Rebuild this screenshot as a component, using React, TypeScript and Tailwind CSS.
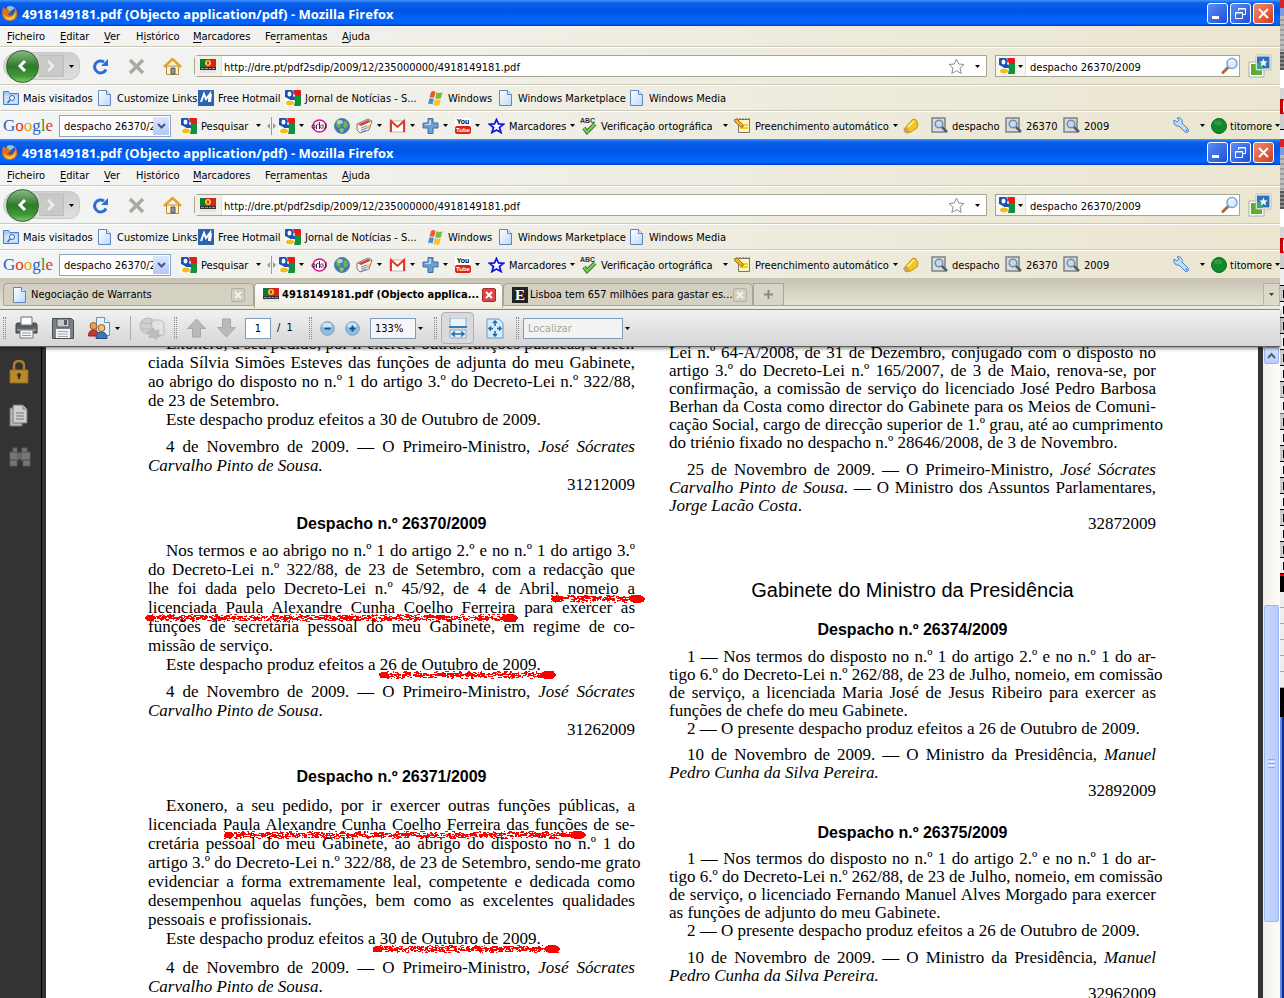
import type { ReactNode } from 'react';

const UI_FONT = "font-['DejaVu_Sans_Condensed','DejaVu_Sans',sans-serif]";

/* ---------- icons ---------- */

const FirefoxIcon = () => (
  <svg width="16" height="16" viewBox="0 0 16 16">
    <circle cx="8" cy="7" r="6.500" fill="#2f55a8" />
    <path d="M5 2c2-2 6-1 8 1l-3 2-2 2-3-3z" fill="#8fc1ee" />
    <path d="M1 2l2 2 2-1 1 2 3 1-1 2-2 1c1 2 4 2 5 0l2-2 0-4c4 4 3 13-5 13S-1 9 1 2z" fill="#e0701a" />
    <path d="M2 8c1 4 4 5 7 4 3-1 4-3 4-6 2 5-1 9-5 9s-6-3-6-7z" fill="#f8c84c" />
  </svg>
);

const GoogleIcon = () => (
  <svg width="16" height="16" viewBox="0 0 16 16" className="shrink-0">
    <path d="M0 0h16v16H0z" fill="#fff" />
    <path d="M8 0h7q1 0 1 1v5h-6z" fill="#e21b1b" />
    <path d="M10 6h6v9q0 1-1 1H9l1-5-2-3z" fill="#109238" />
    <path d="M0 1q0-1 1-1h6l2 3-1 3 2 2v2H5L2 8 0 7z" fill="#1c50b8" />
    <ellipse cx="4.500" cy="4" rx="2" ry="2.500" fill="#fff" />
    <path d="M0 8l4 1 1 1-5 2z" fill="#fff" />
    <ellipse cx="5" cy="13" rx="4" ry="2.500" fill="#f2bd1d" />
  </svg>
);

const FlagIcon = () => (
  <svg width="16" height="14" viewBox="0 0 16 14" className="shrink-0">
    <path d="M0 0h6v8H0z" fill="#0a7a35" />
    <path d="M6 0h10v8H6z" fill="#d8231b" />
    <circle cx="8" cy="4" r="3" fill="#f0cf2a" />
    <path d="M7 2.500h2v3H7z" fill="#c33" />
    <path d="M0 8h16v3H0z" fill="#333" />
    <path d="M1 9.500h3M5 9.500h3M9 9.500h2M12 9.500h3" stroke="#999" />
    <path d="M0 11h16v3H0z" fill="#e4e4e4" />
  </svg>
);

const PageIcon = () => (
  <svg width="16" height="16" viewBox="0 0 16 16" className="shrink-0">
    <defs>
      <linearGradient id="pageFill" x1="0" y1="0" x2="1" y2="1">
        <stop offset="0" stopColor="#fff" />
        <stop offset="1" stopColor="#bcd8fb" />
      </linearGradient>
    </defs>
    <path d="M1.500.500h8l4 4v11h-12z" fill="url(#pageFill)" stroke="#5f87bf" />
    <path d="M9.500.500v4h4" fill="#dcebfd" stroke="#5f87bf" />
  </svg>
);

const FolderIcon = () => (
  <svg width="16" height="16" viewBox="0 0 16 16" className="shrink-0">
    <path d="M.500 14.500v-13h5l1.500 2h8.500v11z" fill="#a9cbf7" stroke="#4a7cc8" />
    <path d="M1.500 13.500v-8h13v8z" fill="#cfe2fc" />
    <circle cx="9" cy="8" r="2.500" fill="#eef6ff" stroke="#3a66b0" />
    <path d="M7 10l-2.500 3" stroke="#3a66b0" strokeWidth="1.500" />
  </svg>
);

const HotmailIcon = () => (
  <svg width="16" height="16" viewBox="0 0 16 16" className="shrink-0">
    <path d="M0 0h16v16H0z" fill="#2d64b0" />
    <path d="M3 12L6 4l2 5 4-5-1 8" fill="none" stroke="#fff" strokeWidth="2" />
    <path d="M11 4h3l-1 8h-3" fill="#fff" />
  </svg>
);

const WindowsIcon = () => (
  <svg width="16" height="16" viewBox="0 0 16 16" className="shrink-0">
    <path d="M3 2c2-1.500 3-1 4.500 0L6 8c-1.500-1-3-1-4.500 0z" fill="#ea5a2c" />
    <path d="M8.500 2.300c2 1 3.500 1 6 0L13 8c-2 1.200-4 1-5.800.200z" fill="#7fba3c" />
    <path d="M1.200 9c1.500-1 3-1 4.600 0L4.500 14.500c-1.500-1-3-1-4.500 0z" fill="#3f8fe0" />
    <path d="M6.800 9.300c1.700 1 3.500 1 6 0L11.500 15c-2 1.200-4 1-6 0z" fill="#f6c12c" />
  </svg>
);

const OrkutIcon = () => (
  <svg width="17" height="16" viewBox="0 0 17 16">
    <ellipse cx="8.500" cy="8" rx="6.500" ry="6" fill="#fff" stroke="#d4148c" strokeWidth="1.500" />
    <path d="M1 8.500q0-2 1.500-2t1.500 2-1.500 2-1.500-2zM5.500 11V7q.500-1 2-.500M8.500 4v7M9 8.500l2-2M9 8.500l2 2.500M12 6.500v3q.500 1.500 2.500.500V6.500M15 5v5" fill="none" stroke="#5a1745" />
  </svg>
);

const GlobeIcon = () => (
  <svg width="16" height="16" viewBox="0 0 16 16">
    <circle cx="8" cy="8" r="7.500" fill="#3f77b5" stroke="#5a7ea8" />
    <path d="M3 3c3-2 5-1 5 1L6 7l1 2-3 1-2-3zM10 3l3 1 1 4-3 3-2-3z" fill="#6fb352" />
    <path d="M5 11l4-1 1 3-3 2z" fill="#8cc46a" />
    <ellipse cx="6" cy="4" rx="3" ry="2" fill="#fff" opacity=".5" />
  </svg>
);

const NewsIcon = () => (
  <svg width="17" height="16" viewBox="0 0 17 16">
    <path d="M1 6l11-5 4 2-3 9-9 3-3-3z" fill="#f2f2ee" stroke="#7b7b76" />
    <path d="M2 6.500l10-4.500 3 1.500-10 4.500z" fill="#e03a2c" />
    <path d="M5 10l6-2M5 12l6-2M5 14l5-2" stroke="#7892b8" />
    <path d="M11 8l3-1-1 3-2 1z" fill="#f0c040" />
  </svg>
);

const GmailIcon = () => (
  <svg width="17" height="14" viewBox="0 0 17 14">
    <path d="M1 2h15v11H1z" fill="#fff" stroke="#dba9a4" />
    <path d="M2 13V2l6.500 6L15 2v11" fill="none" stroke="#dc3a30" strokeWidth="2" />
  </svg>
);

const PlusIcon = () => (
  <svg width="17" height="16" viewBox="0 0 17 16">
    <path d="M6 .500h5V5h5v5h-5v5.500H6V10H1V5h5z" fill="#6d9fd0" stroke="#3d6f9f" />
    <path d="M7 2h2v5H3V6h4z" fill="#b9d6ee" />
  </svg>
);

const YoutubeIcon = () => (
  <span className="flex w-4 shrink-0 flex-col items-center bg-white font-['Liberation_Sans',sans-serif] text-[7px] leading-[8px] font-bold text-black">
    <span>You</span>
    <span className="w-4 rounded-xs bg-[#e02020] text-center text-[6px] text-white">Tube</span>
  </span>
);

const BlueStar = () => (
  <svg width="17" height="16" viewBox="0 0 16 16">
    <path d="M8 1.500l2 4.500 5 .300-4 3.200 1.500 5L8 12l-4.500 2.500 1.500-5-4-3.200L6 6z" fill="#fff" stroke="#1414e6" strokeWidth="1.800" />
  </svg>
);

const SpellIcon = () => (
  <svg width="17" height="18" viewBox="0 0 17 18">
    <text x="0" y="6" fontSize="7" fontFamily="Liberation Sans, sans-serif" fontWeight="bold" fill="#333">ABC</text>
    <path d="M4 11l3 4 8-8" fill="none" stroke="#2e7d22" strokeWidth="4" />
    <path d="M4 11l3 4 8-8" fill="none" stroke="#7fd25c" strokeWidth="2" />
  </svg>
);

const FormIcon = () => (
  <svg width="17" height="17" viewBox="0 0 17 17">
    <path d="M4.500 2.500h11v13h-11z" fill="#fdf6b4" stroke="#777" />
    <path d="M6 8h8M6 11h8" stroke="#f1cf2a" strokeWidth="2" />
    <path d="M3 1v2M6 1v2M9 1v2M12 1v2M15 1v2" stroke="#666" />
    <path d="M0 3l3-1 6 6v2H7L1 5z" fill="#f4b625" stroke="#a66b14" />
  </svg>
);

const MarkerIcon = () => (
  <svg width="16" height="16" viewBox="0 0 16 16">
    <path d="M1 11l9-10 3 1 2 4-1 4-6 4-5 1z" fill="#f2c81e" stroke="#c49312" />
    <path d="M0 11l4-1 3 4-5 1z" fill="#c6a268" />
    <path d="M5 9l6-6" stroke="#fff2a0" strokeWidth="1.500" />
  </svg>
);

const FindIcon = () => (
  <svg width="17" height="17" viewBox="0 0 17 17">
    <path d="M1 1h13v14H1z" fill="#d9dde0" stroke="#7b848c" strokeWidth="1.500" />
    <circle cx="8" cy="7" r="3.800" fill="#c3daf0" stroke="#7d8c9a" strokeWidth="1.500" />
    <path d="M11 10l5 5" stroke="#555f6a" strokeWidth="2.500" />
  </svg>
);

const WrenchIcon = () => (
  <svg width="17" height="17" viewBox="0 0 17 17">
    <path d="M1 3l3 2 2-2-2-2c3-1 6 1 5 5l6 6c2 2-1 5-3 3L6 9C3 10 0 7 1 3z" fill="#bcdcf8" stroke="#4682c4" />
    <circle cx="13.500" cy="13.500" r="1" fill="#4682c4" />
  </svg>
);

const GreenDot = () => (
  <svg width="16" height="16" viewBox="0 0 16 16" className="shrink-0">
    <circle cx="8" cy="8" r="7.500" fill="#128a2a" stroke="#0c6a1e" />
    <ellipse cx="7" cy="5" rx="4" ry="2.500" fill="#2f9a44" />
  </svg>
);

const ReloadIcon = () => (
  <svg width="17" height="17" viewBox="0 0 17 17">
    <path d="M14 11.500A6 6 0 1 1 12 4" fill="none" stroke="#2b6fd6" strokeWidth="3" />
    <path d="M16 1v7H9z" fill="#2b6fd6" />
  </svg>
);

const StopIcon = () => (
  <svg width="17" height="17" viewBox="0 0 17 17">
    <path d="M2 2l13 13M15 2L2 15" stroke="#a9a9a6" strokeWidth="3.500" />
  </svg>
);

const HomeIcon = () => (
  <svg width="19" height="17" viewBox="0 0 19 17">
    <path d="M3.500 8h12v8.500h-12z" fill="#fdf3cf" stroke="#b98a3c" />
    <path d="M1 9l8.500-8L18 9" fill="none" stroke="#e9a21d" strokeWidth="2.500" />
    <path d="M8 10h4v6H8z" fill="#7a94c4" stroke="#6a5634" />
  </svg>
);

const MagnifierIcon = () => (
  <svg width="18" height="18" viewBox="0 0 18 18">
    <path d="M2 15.500l5-5" stroke="#b5673a" strokeWidth="3" strokeLinecap="round" />
    <circle cx="11" cy="6.500" r="5" fill="#d9ecfc" stroke="#7aa4d8" strokeWidth="1.500" />
    <path d="M8 5q2-3 5-1" fill="none" stroke="#fff" strokeWidth="1.500" />
  </svg>
);

const AddonIcon = () => (
  <svg width="24" height="24" viewBox="0 0 24 24">
    <path d="M1 8h15v15H1z" fill="#fff" stroke="#aaa" />
    <path d="M3 10h11v11H3z" fill="#59b030" />
    <path d="M8 1h15v15H8z" fill="#fff" stroke="#bbb" />
    <path d="M9 2.500h12.500v12H9z" fill="#2a72b8" />
    <path d="M9 9h6v6H9z" fill="#3fa08c" />
    <path d="M15.500 4.500l1.200 3h3l-2.400 2 .900 3-2.700-1.800-2.700 1.800.900-3-2.400-2h3z" fill="#fff" />
  </svg>
);

const Caret = ({ className = '' }: { className?: string }) => (
  <svg width="5" height="3" viewBox="0 0 5 3" className={`shrink-0 ${className}`}>
    <path d="M0 0h5L2.500 3z" fill="#000" />
  </svg>
);

/* ---------- browser chrome ---------- */

const TitleBar = () => (
  <header className="flex h-[26px] items-center bg-[linear-gradient(#3f96ff,#0a5ee8_12%,#0054e3_45%,#0066ff_75%,#0062f8_90%,#003dc4)] pl-0.5 pr-1.5">
    <FirefoxIcon />
    <h1 className="ml-1 flex-1 pt-0.5 font-['Open_Sans','Noto_Sans',sans-serif] text-[13px] font-bold whitespace-nowrap text-white">
      4918149181.pdf (Objecto application/pdf) - Mozilla Firefox
    </h1>
    <div className="flex gap-0.5">
      <button aria-label="Minimizar" className="flex h-[21px] w-[21px] items-end rounded-[3px] border border-white bg-linear-to-br from-[#5c8cf5] to-[#1c4fd6] p-1">
        <span className="h-[3px] w-[7px] bg-white" />
      </button>
      <button aria-label="Restaurar" className="flex h-[21px] w-[21px] items-center justify-center rounded-[3px] border border-white bg-linear-to-br from-[#5c8cf5] to-[#1c4fd6]">
        <svg width="11" height="11" viewBox="0 0 11 11" fill="none" stroke="#fff">
          <path d="M3.500 3V.500h7v6H8M.500 4.500h7v6h-7zM.500 5h7M3.500 1h7" />
        </svg>
      </button>
      <button aria-label="Fechar" className="flex h-[21px] w-[21px] items-center justify-center rounded-[3px] border border-white bg-linear-to-br from-[#f08a6c] to-[#d03a14]">
        <svg width="11" height="11" viewBox="0 0 11 11">
          <path d="M1 1l9 9M10 1l-9 9" stroke="#fff" strokeWidth="2" />
        </svg>
      </button>
    </div>
  </header>
);

const menus = [
  { before: '', hot: 'F', after: 'icheiro', width: 'w-[53px]' },
  { before: '', hot: 'E', after: 'ditar', width: 'w-[44px]' },
  { before: '', hot: 'V', after: 'er', width: 'w-[32px]' },
  { before: 'H', hot: 'i', after: 'stórico', width: 'w-[57px]' },
  { before: '', hot: 'M', after: 'arcadores', width: 'w-[72px]' },
  { before: 'Fe', hot: 'r', after: 'ramentas', width: 'w-[77px]' },
  { before: '', hot: 'A', after: 'juda', width: 'w-[40px]' },
];

const MenuBar = () => (
  <nav className="flex h-[21px] items-center border-b border-[#cfcab8] pt-0.5 pl-[7px]">
    {menus.map((menu) => (
      <button key={menu.hot} className={`text-left whitespace-nowrap ${menu.width}`}>
        {menu.before}
        <u className="underline-offset-2">{menu.hot}</u>
        {menu.after}
      </button>
    ))}
  </nav>
);

const NavBar = () => (
  <div className="flex h-[38px] items-center border-t border-b border-t-white border-b-[#cfcab8] pl-[3px] pr-2">
    <div className="flex h-7 w-[77px] shrink-0 items-center rounded-l-2xl rounded-r-xl border border-[#c9c9c7] bg-linear-to-b from-[#cfcfcd] to-[#dededc]">
      <button aria-label="Retroceder" className="-my-1 ml-0.5 flex h-[33px] w-[33px] shrink-0 items-center justify-center rounded-full border border-[#2f5c2c] bg-[linear-gradient(#86b982,#2f7a2b_50%,#3f9a35_80%,#7cc66c)]">
        <svg width="14" height="16" viewBox="0 0 14 16">
          <path d="M9 3L4 8l5 5" fill="none" stroke="#fff" strokeWidth="3" />
        </svg>
      </button>
      <button aria-label="Avançar" className="flex h-[22px] w-[25px] items-center justify-center border border-l-0 border-[#bdbdbb] bg-[#c9c9c8]">
        <svg width="12" height="12" viewBox="0 0 12 12">
          <path d="M3 1l5 5-5 5" fill="none" stroke="#eee" strokeWidth="2.500" />
        </svg>
      </button>
      <button aria-label="Histórico recente" className="ml-[5px] flex h-5 items-center">
        <Caret />
      </button>
    </div>
    <button aria-label="Recarregar" className="ml-3"><ReloadIcon /></button>
    <button aria-label="Parar" className="ml-[19px]"><StopIcon /></button>
    <button aria-label="Página inicial" className="ml-[18px]"><HomeIcon /></button>
    <div className="ml-3 flex h-[22px] flex-1 items-center rounded-l-sm border border-[#a5a595] bg-white">
      <span className="flex h-full w-[27px] items-center justify-center border-r border-[#ddd] bg-[#f3f1e6]"><FlagIcon /></span>
      <input
        aria-label="Endereço"
        defaultValue="http://dre.pt/pdf2sdip/2009/12/235000000/4918149181.pdf"
        className="ml-0.5 h-full min-w-0 flex-1 pt-0.5 outline-none"
      />
      <button aria-label="Adicionar aos marcadores">
        <svg width="17" height="17" viewBox="0 0 17 17">
          <path d="M8.500 1l2.200 5 5.300.500-4 3.600 1.200 5.400-4.700-2.800-4.700 2.800L5 10.100 1 6.500 6.300 6z" fill="#fff" stroke="#8d8d8d" />
        </svg>
      </button>
      <button aria-label="Mostrar histórico" className="mr-1.5 ml-2.5"><Caret /></button>
    </div>
    <div className="ml-2 flex h-[22px] w-[245px] items-center border border-[#a5a595] bg-white">
      <button aria-label="Motor de pesquisa" className="flex h-full w-[30px] items-center gap-[3px] border-r border-[#ddd] bg-[#f6f5ef] pl-[3px]">
        <GoogleIcon />
        <Caret />
      </button>
      <input aria-label="Pesquisar na Web" defaultValue="despacho 26370/2009" className="ml-1 h-full min-w-0 flex-1 pt-0.5 outline-none" />
      <button aria-label="Pesquisar"><MagnifierIcon /></button>
    </div>
    <button aria-label="Extensão" className="ml-2"><AddonIcon /></button>
  </div>
);

const bookmarks = [
  { label: 'Mais visitados', icon: <FolderIcon />, width: 'w-[94px]' },
  { label: 'Customize Links', icon: <PageIcon />, width: 'w-[101px]' },
  { label: 'Free Hotmail', icon: <HotmailIcon />, width: 'w-[87px]' },
  { label: 'Jornal de Notícias - S...', icon: <GoogleIcon />, width: 'w-[143px]' },
  { label: 'Windows', icon: <WindowsIcon />, width: 'w-[70px]' },
  { label: 'Windows Marketplace', icon: <PageIcon />, width: 'w-[131px]' },
  { label: 'Windows Media', icon: <PageIcon />, width: 'w-[100px]' },
];

const BookmarksBar = () => (
  <nav className="flex h-[26px] items-center border-t border-b border-t-white border-b-[#cfcab8] pl-[3px]">
    {bookmarks.map((item) => (
      <a key={item.label} href="#" className={`flex shrink-0 items-center gap-1 whitespace-nowrap ${item.width}`}>
        {item.icon}
        <span className="pt-0.5">{item.label}</span>
      </a>
    ))}
  </nav>
);

interface ToolProps {
  name: string;
  width: string;
  icon: ReactNode;
  label?: string;
  caret?: boolean;
}

const Tool = ({ name, width, icon, label, caret }: ToolProps) => (
  <button aria-label={name} className={`flex shrink-0 items-center gap-1 whitespace-nowrap [&_svg]:shrink-0 ${width}`}>
    {icon}
    {label && <span className="flex-1 pt-0.5 text-left">{label}</span>}
    {caret && <Caret className={label ? 'mr-1.5' : ''} />}
  </button>
);

const GoogleBar = () => (
  <div className="flex h-[28px] items-center border-t border-white pl-[3px]">
    <span className="w-14 font-['Liberation_Serif',serif] text-[17px] leading-5">
      <span className="text-[#2a5bd0]">G</span>
      <span className="text-[#d8322a]">o</span>
      <span className="text-[#dfa800]">o</span>
      <span className="text-[#2a5bd0]">g</span>
      <span className="text-[#1e9a3c]">l</span>
      <span className="text-[#d8322a]">e</span>
    </span>
    <div className="mr-2.5 flex h-[22px] w-[112px] shrink-0 items-center border border-[#8ea6c4] bg-white p-px">
      <input aria-label="Pesquisa Google" defaultValue="despacho 26370/2009" className="ml-[3px] h-full min-w-0 flex-1 pt-0.5 outline-none" />
      <button aria-label="Pesquisas anteriores" className="flex h-[18px] w-4 items-center justify-center bg-linear-to-b from-[#dbe6ff] to-[#b4c8f6]">
        <svg width="9" height="6" viewBox="0 0 9 6">
          <path d="M1 1l3.500 3.500L8 1" fill="none" stroke="#3f5684" strokeWidth="2" />
        </svg>
      </button>
    </div>
    <Tool name="Pesquisar" width="w-[86px]" icon={<GoogleIcon />} label="Pesquisar" caret />
    <span className="flex w-3 items-center">
      <svg width="9" height="18" viewBox="0 0 9 18" fill="#999">
        <path d="M4 0h1v18H4zM0 9l3-3v6zM9 9L6 6v6z" />
      </svg>
    </span>
    <Tool name="Google" width="w-8" icon={<GoogleIcon />} caret />
    <Tool name="Orkut" width="w-[23px]" icon={<OrkutIcon />} />
    <Tool name="Tradutor" width="w-[22px]" icon={<GlobeIcon />} />
    <Tool name="Notícias" width="w-[33px]" icon={<NewsIcon />} caret />
    <Tool name="Gmail" width="w-[33px]" icon={<GmailIcon />} caret />
    <Tool name="Adicionar" width="w-[33px]" icon={<PlusIcon />} caret />
    <Tool name="YouTube" width="w-[33px]" icon={<YoutubeIcon />} caret />
    <Tool name="Marcadores" width="w-[92px]" icon={<BlueStar />} label="Marcadores" caret />
    <Tool name="Verificação ortográfica" width="w-[154px]" icon={<SpellIcon />} label="Verificação ortográfica" caret />
    <Tool name="Preenchimento automático" width="w-[169px]" icon={<FormIcon />} label="Preenchimento automático" caret />
    <Tool name="Realçar" width="w-[28px]" icon={<MarkerIcon />} />
    <Tool name="Localizar despacho" width="w-[74px]" icon={<FindIcon />} label="despacho" />
    <Tool name="Localizar 26370" width="w-[58px]" icon={<FindIcon />} label="26370" />
    <Tool name="Localizar 2009" width="w-[58px]" icon={<FindIcon />} label="2009" />
    <span className="flex-1" />
    <button aria-label="Definições" className="flex w-[38px] shrink-0 items-center justify-between pr-1.5">
      <WrenchIcon />
      <Caret />
    </button>
    <button className="flex w-[69px] shrink-0 items-center gap-[3px]">
      <GreenDot />
      <span className="pt-0.5">titomore</span>
      <Caret />
    </button>
  </div>
);

const BrowserChrome = () => (
  <div className="bg-linear-to-r from-[#f3f5f5] via-[#efede3] to-[#ebe6cf]">
    <TitleBar />
    <MenuBar />
    <NavBar />
    <BookmarksBar />
    <GoogleBar />
  </div>
);

/* ---------- tabs ---------- */

const CloseTab = ({ active }: { active?: boolean }) => (
  <button
    aria-label="Fechar separador"
    className={`flex h-[14px] w-[14px] shrink-0 items-center justify-center rounded-xs border ${
      active ? 'border-[#a52a2a] bg-[#d9474b]' : 'border-[#b5b2a4] bg-[#d2cfc2]'
    }`}
  >
    <svg width="8" height="8" viewBox="0 0 8 8">
      <path d="M1 1l6 6M7 1L1 7" stroke={active ? '#fff' : '#f4f3ec'} strokeWidth="1.800" />
    </svg>
  </button>
);

const TabBar = () => (
  <div className="flex h-[31px] items-end bg-linear-to-b from-[#c6c3b3] via-[#d8d5c6] to-[#e8e5d8] pl-[3px]">
    <div className="flex h-[26px] flex-1 items-start border-b-[3px] border-[#efede0]">
      <div className="flex h-[23px] w-[251px] items-center rounded-t-sm border border-[#a8a594] bg-[#d4d1c3] pr-2 pl-2">
        <PageIcon />
        <span className="ml-[3px] flex-1 whitespace-nowrap">Negociação de Warrants</span>
        <CloseTab />
      </div>
      <div className="flex h-[25px] w-[249px] items-center rounded-t-sm border border-b-0 border-[#a8a594] bg-linear-to-b from-white to-[#efede0] pr-1.5 pb-0.5 pl-2">
        <FlagIcon />
        <span className="ml-[3px] flex-1 font-bold whitespace-nowrap">4918149181.pdf (Objecto applica...</span>
        <CloseTab active />
      </div>
      <div className="flex h-[23px] w-[250px] items-center rounded-t-sm border border-[#a8a594] bg-[#d4d1c3] pr-1.5 pl-2">
        <span className="flex h-4 w-4 shrink-0 items-center justify-center bg-[#222] font-['Liberation_Serif',serif] text-[15px] font-bold text-white">E</span>
        <span className="ml-0.5 flex-1 whitespace-nowrap">Lisboa tem 657 milhões para gastar es...</span>
        <CloseTab />
      </div>
      <button aria-label="Novo separador" className="flex h-[23px] w-[31px] items-center justify-center border border-[#a8a594] bg-[#d8d5c8]">
        <svg width="9" height="9" viewBox="0 0 9 9">
          <path d="M4.500 0v9M0 4.500h9" stroke="#888" strokeWidth="2" />
        </svg>
      </button>
      <span className="h-[23px] flex-1 border-b border-[#a8a594]" />
      <button aria-label="Listar separadores" className="flex h-[23px] w-[17px] items-center justify-center border border-[#a8a594] bg-[#dedbcd] opacity-70">
        <Caret />
      </button>
    </div>
  </div>
);

/* ---------- PDF viewer ---------- */

const Grip = ({ className = '' }: { className?: string }) => (
  <span className={`h-[22px] w-[3px] shrink-0 border-x border-dotted border-[#8c8c8c] ${className}`} />
);

const ZoomButton = ({ plus }: { plus?: boolean }) => (
  <button aria-label={plus ? 'Ampliar' : 'Reduzir'}>
    <svg width="15" height="15" viewBox="0 0 15 15">
      <circle cx="7.500" cy="7.500" r="6.800" fill="#8dbfe4" stroke="#7d9fbe" />
      <ellipse cx="7" cy="4.500" rx="4.500" ry="2.800" fill="#cfe6f6" />
      <path d={plus ? 'M4.500 7.500h6M7.500 4.500v6' : 'M4.500 7.500h6'} stroke="#1b4f80" strokeWidth="2" />
    </svg>
  </button>
);

const PdfToolbar = () => (
  <div className="relative z-10 flex h-[38px] shrink-0 items-center border-t border-b border-t-[#8a887c] border-b-[#5a5a5a] bg-linear-to-b from-[#f1f1f1] to-[#d6d6d6] pl-[3px] shadow-[0_2px_3px_rgba(0,0,0,0.4)]">
    <Grip />
    <button aria-label="Imprimir" className="ml-[9px]">
      <svg width="23" height="24" viewBox="0 0 23 24">
        <path d="M6 1h11v8H6z" fill="#fff" stroke="#666" />
        <path d="M1 9q0-2 2-2h2v3h13V7h2q2 0 2 2v8H1z" fill="#5c6268" stroke="#3a3e42" />
        <path d="M2 13h19v2H2z" fill="#8d949a" />
        <path d="M5 14h13v8H5z" fill="#f4f6f7" stroke="#777" />
        <path d="M7 17h9M7 19.500h9" stroke="#999" />
      </svg>
    </button>
    <button aria-label="Guardar" className="ml-3.5">
      <svg width="22" height="23" viewBox="0 0 22 23">
        <path d="M.500 1.500h19l2 2v18H.500z" fill="#7b8187" stroke="#4b4f53" />
        <path d="M5 2h12v8H5z" fill="#c5cacd" stroke="#555" />
        <path d="M12 3h3v5h-3z" fill="#555b60" />
        <path d="M4 12h14v9H4z" fill="#eef3f5" />
        <path d="M6 14.500h10M6 17h10M6 19.500h10" stroke="#9aa8b2" />
      </svg>
    </button>
    <button aria-label="Colaborar" className="ml-3.5 flex items-center gap-[5px]">
      <svg width="22" height="24" viewBox="0 0 22 24">
        <path d="M8.500 1.500h8l5 5v13h-13z" fill="#e6f2fc" stroke="#5d92c2" />
        <path d="M16.500 1.500v5h5" fill="#fff" stroke="#5d92c2" />
        <circle cx="5.500" cy="10" r="3.500" fill="#e0a060" stroke="#9b5a20" />
        <path d="M.500 20q0-6 5-6t5 6z" fill="#c23b34" stroke="#8b221c" />
        <circle cx="13.500" cy="12" r="3.500" fill="#f0be85" stroke="#9b5a20" />
        <path d="M8 22.500q0-6.500 5.500-6.500t5.500 6.500z" fill="#3f74b6" stroke="#214c82" />
      </svg>
      <Caret />
    </button>
    <span className="mr-2 ml-2.5 h-6 w-px bg-[#aaa]" />
    <button aria-label="Criar PDF">
      <svg width="26" height="24" viewBox="0 0 26 24" stroke="#b8b8b8">
        <circle cx="9" cy="10" r="8" fill="#cfcfcf" />
        <path d="M12 4h10l3 3v12H14z" fill="#e3e3e3" />
        <path d="M3 6q6 4 12-1M3 13h12" fill="none" />
        <path d="M14 12l2 3 4-1-1 4 3 2-4 1-1 3-3-3-4 1 1-4-3-2 4-1z" fill="#bdbdbd" />
      </svg>
    </button>
    <Grip className="mx-[9px]" />
    <button aria-label="Página anterior">
      <svg width="21" height="20" viewBox="0 0 21 20">
        <path d="M10.500 1l9 9.500h-5V19h-8v-8.500h-5z" fill="#b9b9b9" stroke="#a8a8a8" />
      </svg>
    </button>
    <button aria-label="Página seguinte" className="ml-[9px]">
      <svg width="21" height="20" viewBox="0 0 21 20">
        <path d="M10.500 19l9-9.500h-5V1h-8v8.500h-5z" fill="#b9b9b9" stroke="#a8a8a8" />
      </svg>
    </button>
    <input aria-label="Página" defaultValue="1" className="ml-2 h-[21px] w-[26px] border border-[#7f9db9] bg-white text-center outline-none" />
    <span className="ml-1.5 w-8 whitespace-pre">/  1</span>
    <Grip />
    <span className="ml-2 flex gap-2.5">
      <ZoomButton />
      <ZoomButton plus />
    </span>
    <input aria-label="Zoom" defaultValue="133%" className="ml-2.5 h-[21px] w-[46px] border border-[#7f9db9] bg-[#f5f5f5] pl-1 outline-none" />
    <button aria-label="Escolher zoom" className="flex h-5 w-[18px] items-center pl-0.5"><Caret /></button>
    <Grip />
    <button aria-label="Ajustar à largura" className="ml-1 flex h-8 w-[33px] items-center justify-center rounded-sm border border-[#b0b0b0] bg-[#dadada]">
      <svg width="18" height="21" viewBox="0 0 18 21">
        <path d="M1 0h16v9H1z" fill="#eaf4fc" stroke="#84acd0" />
        <path d="M0 8h18v2H0z" fill="#3a7fb8" />
        <path d="M1 12h16v8H1z" fill="#e4f1fb" stroke="#84acd0" />
        <path d="M3 16h12M6 13.500L3 16l3 2.500M12 13.500l3 2.500-3 2.500" fill="none" stroke="#1e6aa8" strokeWidth="1.500" />
      </svg>
    </button>
    <button aria-label="Ajustar à página" className="mr-3 ml-3">
      <svg width="18" height="21" viewBox="0 0 18 21">
        <path d="M1 1h12l4 4v15H1z" fill="#d6eafa" stroke="#5d99cc" />
        <path d="M9 3v5M7 5l2-2 2 2M9 13v5M7 16l2 2 2-2M3 10.500h4M5 8.500l-2 2 2 2M11 10.500h4M13 8.500l2 2-2 2" fill="none" stroke="#1e6aa8" strokeWidth="1.500" />
      </svg>
    </button>
    <Grip className="mr-1" />
    <input aria-label="Localizar" placeholder="Localizar" className="h-[21px] w-[100px] border border-[#7f9db9] bg-[#f3f3f3] pl-1 outline-none placeholder:text-[#a5a596]" />
    <button aria-label="Opções de localização" className="flex h-5 items-center pl-0.5"><Caret /></button>
  </div>
);

const SideBar = () => (
  <aside className="flex w-[46px] shrink-0 flex-col gap-5 border-r-4 border-[#333] bg-[linear-gradient(90deg,#333_40px,#666_40px,#000_41px)] pt-[13px] pl-[9px]">
    <button aria-label="Segurança">
      <svg width="20" height="24" viewBox="0 0 20 24">
        <path d="M5 11V6q0-5 5-5t5 5v5" fill="none" stroke="#a5802f" strokeWidth="2.500" />
        <path d="M1 10h18v13H1z" fill="#b98a2c" stroke="#8f6a1d" />
        <circle cx="10" cy="15" r="2" fill="#3d2f10" />
        <path d="M9 15h2v4H9z" fill="#3d2f10" />
      </svg>
    </button>
    <button aria-label="Páginas">
      <svg width="20" height="23" viewBox="0 0 20 23" stroke="#777">
        <path d="M1 4h12v18H1z" fill="#bbb" />
        <path d="M4 1h10l4 4v14H4z" fill="#cfcfcf" />
        <path d="M14 1v4h4M7 9h8M7 12h8M7 15h8" fill="none" />
      </svg>
    </button>
    <button aria-label="Pesquisar no documento">
      <svg width="22" height="20" viewBox="0 0 22 20" fill="#777" stroke="#5c5c5c">
        <path d="M4 1h4v4H4zM13 1h5v4h-5zM1 5h8v8H1zM12 5h9v8h-9zM1 13h7v6H1zM14 13h7v6h-7zM9 6h3v6H9z" />
      </svg>
    </button>
  </aside>
);

// Rough marker stroke: solid ends with speckles between them.
const Scribble = ({ left, width }: { left: number; width: number }) => {
  let seed = width * 7 + 13;
  const next = () => {
    seed = (seed * 1103515245 + 12345) % 2147483648;
    return seed / 2147483648;
  };
  let path = '';
  for (let i = 0; i < width * 3; i++) {
    const x = Math.floor(next() * (width - 3));
    const y = 1 + Math.floor((next() + next()) * 4);
    const w = 1 + Math.floor(next() * 3);
    path += `M${x} ${y}h${w}v1h-${w}z`;
  }
  return (
    <svg
      className="absolute top-[15px]"
      style={{ left, width }}
      height="10"
      viewBox={`0 0 ${width} 10`}
      fill="red"
      shapeRendering="crispEdges"
    >
      <ellipse cx="5" cy="5" rx="5" ry="3" />
      <ellipse cx={width - 8} cy="5" rx="8" ry="4" />
      <path d={path} />
    </svg>
  );
};

interface LineProps {
  children: ReactNode;
  indent?: boolean;
  last?: boolean;
  mark?: [number, number];
}

const Line = ({ children, indent, last, mark }: LineProps) => (
  <span
    className={`relative block whitespace-nowrap ${indent ? 'pl-[18px]' : ''} ${
      last ? '' : 'text-justify [text-align-last:justify]'
    }`}
  >
    {children}
    {mark && <Scribble left={mark[0]} width={mark[1]} />}
  </span>
);

const Heading = ({ children }: { children: ReactNode }) => (
  <h3 className="text-center font-['Liberation_Sans',sans-serif] text-[16px] font-bold">{children}</h3>
);

const LeftColumn = () => (
  <div className="leading-[19px]">
    <p>
      <Line indent>Exonero, a seu pedido, por ir exercer outras funções públicas, a licen-</Line>
      <Line>ciada Sílvia Simões Esteves das funções de adjunta do meu Gabinete,</Line>
      <Line>ao abrigo do disposto no n.º 1 do artigo 3.º do Decreto-Lei n.º 322/88,</Line>
      <Line last>de 23 de Setembro.</Line>
      <Line indent last>Este despacho produz efeitos a 30 de Outubro de 2009.</Line>
    </p>
    <p className="mt-2">
      <Line indent>4 de Novembro de 2009. — O Primeiro-Ministro, <i>José Sócrates</i></Line>
      <Line last><i>Carvalho Pinto de Sousa.</i></Line>
    </p>
    <p className="mb-5 text-right">31212009</p>
    <Heading>Despacho n.º 26370/2009</Heading>
    <p className="mt-2">
      <Line indent>Nos termos e ao abrigo no n.º 1 do artigo 2.º e no n.º 1 do artigo 3.º</Line>
      <Line>do Decreto-Lei n.º 322/88, de 23 de Setembro, com a redacção que</Line>
      <Line mark={[403, 94]}>lhe foi dada pelo Decreto-Lei n.º 45/92, de 4 de Abril, nomeio a</Line>
      <Line mark={[-3, 373]}>licenciada Paula Alexandre Cunha Coelho Ferreira para exercer as</Line>
      <Line>funções de secretária pessoal do meu Gabinete, em regime de co-</Line>
      <Line last>missão de serviço.</Line>
      <Line indent last mark={[231, 177]}>Este despacho produz efeitos a 26 de Outubro de 2009.</Line>
    </p>
    <p className="mt-2">
      <Line indent>4 de Novembro de 2009. — O Primeiro-Ministro, <i>José Sócrates</i></Line>
      <Line last><i>Carvalho Pinto de Sousa</i>.</Line>
    </p>
    <p className="mb-7 text-right">31262009</p>
    <Heading>Despacho n.º 26371/2009</Heading>
    <p className="mt-2.5">
      <Line indent>Exonero, a seu pedido, por ir exercer outras funções públicas, a</Line>
      <Line mark={[76, 362]}>licenciada Paula Alexandre Cunha Coelho Ferreira das funções de se-</Line>
      <Line>cretária pessoal do meu Gabinete, ao abrigo do disposto no n.º 1 do</Line>
      <Line>artigo 3.º do Decreto-Lei n.º 322/88, de 23 de Setembro, sendo-me grato</Line>
      <Line>evidenciar a forma extremamente leal, competente e dedicada como</Line>
      <Line>desempenhou aquelas funções, bem como as excelentes qualidades</Line>
      <Line last>pessoais e profissionais.</Line>
      <Line indent last mark={[225, 187]}>Este despacho produz efeitos a 30 de Outubro de 2009.</Line>
    </p>
    <p className="mt-2.5">
      <Line indent>4 de Novembro de 2009. — O Primeiro-Ministro, <i>José Sócrates</i></Line>
      <Line last><i>Carvalho Pinto de Sousa</i>.</Line>
    </p>
  </div>
);

const RightColumn = () => (
  <div className="pt-2.5 leading-[18px]">
    <p>
      <Line>Lei n.º 64-A/2008, de 31 de Dezembro, conjugado com o disposto no</Line>
      <Line>artigo 3.º do Decreto-Lei n.º 165/2007, de 3 de Maio, renova-se, por</Line>
      <Line>confirmação, a comissão de serviço do licenciado José Pedro Barbosa</Line>
      <Line>Berhan da Costa como director do Gabinete para os Meios de Comuni-</Line>
      <Line>cação Social, cargo de direcção superior de 1.º grau, até ao cumprimento</Line>
      <Line last>do triénio fixado no despacho n.º 28646/2008, de 3 de Novembro.</Line>
    </p>
    <p className="mt-[9px]">
      <Line indent>25 de Novembro de 2009. — O Primeiro-Ministro, <i>José Sócrates</i></Line>
      <Line><i>Carvalho Pinto de Sousa.</i> — O Ministro dos Assuntos Parlamentares,</Line>
      <Line last><i>Jorge Lacão Costa</i>.</Line>
    </p>
    <p className="text-right">32872009</p>
    <h2 className="mt-[45px] mb-[19px] text-center font-['Liberation_Sans',sans-serif] text-[20px] leading-6">
      Gabinete do Ministro da Presidência
    </h2>
    <Heading>Despacho n.º 26374/2009</Heading>
    <p className="mt-[9px]">
      <Line indent>1 — Nos termos do disposto no n.º 1 do artigo 2.º e no n.º 1 do ar-</Line>
      <Line>tigo 6.º do Decreto-Lei n.º 262/88, de 23 de Julho, nomeio, em comissão</Line>
      <Line>de serviço, a licenciada Maria José de Jesus Ribeiro para exercer as</Line>
      <Line last>funções de chefe do meu Gabinete.</Line>
      <Line indent last>2 — O presente despacho produz efeitos a 26 de Outubro de 2009.</Line>
    </p>
    <p className="mt-2">
      <Line indent>10 de Novembro de 2009. — O Ministro da Presidência, <i>Manuel</i></Line>
      <Line last><i>Pedro Cunha da Silva Pereira.</i></Line>
    </p>
    <p className="mb-6 text-right">32892009</p>
    <Heading>Despacho n.º 26375/2009</Heading>
    <p className="mt-2">
      <Line indent>1 — Nos termos do disposto no n.º 1 do artigo 2.º e no n.º 1 do ar-</Line>
      <Line>tigo 6.º do Decreto-Lei n.º 262/88, de 23 de Julho, nomeio, em comissão</Line>
      <Line>de serviço, o licenciado Fernando Manuel Alves Morgado para exercer</Line>
      <Line last>as funções de adjunto do meu Gabinete.</Line>
      <Line indent last>2 — O presente despacho produz efeitos a 26 de Outubro de 2009.</Line>
    </p>
    <p className="mt-[9px]">
      <Line indent>10 de Novembro de 2009. — O Ministro da Presidência, <i>Manuel</i></Line>
      <Line last><i>Pedro Cunha da Silva Pereira.</i></Line>
    </p>
    <p className="text-right">32962009</p>
  </div>
);

const ScrollBar = () => (
  <div className="flex w-[17px] shrink-0 flex-col items-center bg-linear-to-r from-[#f1efe8] to-[#fdfdfa]">
    <button aria-label="Subir" className="flex h-[17px] w-[15px] shrink-0 items-center justify-center rounded-xs border border-[#9ab5ee] bg-linear-to-b from-[#dbe6ff] to-[#b8ccf8]">
      <svg width="9" height="7" viewBox="0 0 9 7">
        <path d="M1 6l3.500-4L8 6" fill="none" stroke="#4d6185" strokeWidth="2" />
      </svg>
    </button>
    <span className="flex-[242]" />
    <div className="flex w-[15px] flex-[316] flex-col items-center justify-center gap-px rounded-xs border border-[#9db8f0] bg-linear-to-r from-[#cbdafe] to-[#b5cafb]">
      <span className="h-px w-[7px] bg-[#8aabee]" />
      <span className="h-px w-[7px] bg-[#eef4ff]" />
      <span className="h-px w-[7px] bg-[#8aabee]" />
      <span className="h-px w-[7px] bg-[#eef4ff]" />
      <span className="h-px w-[7px] bg-[#8aabee]" />
    </div>
    <span className="flex-[76]" />
  </div>
);

/* ---------- sliver of the window behind ---------- */

const SliverTop = () => (
  <>
    <div className="h-2 shrink-0 bg-[#d8232a]" />
    <div className="h-2 shrink-0 bg-[#7d9be0]" />
    <div className="h-9 shrink-0 bg-[repeating-linear-gradient(#bdbdbd_0_3px,#9c9c9c_3px_5px)]" />
    <div className="h-[18px] shrink-0 bg-[repeating-linear-gradient(#555_0_2px,#888_2px_4px)]" />
    <div className="h-[18px] shrink-0 bg-white" />
    <div className="h-[11px] shrink-0 bg-[#d5d5d5]" />
    <div className="h-[15px] shrink-0 border-r border-y-[3px] border-y-[#c00] border-r-white bg-[#c00]" />
    <div className="h-4 shrink-0 border-b border-black bg-[#cdcdcd]" />
    <div className="h-[9px] shrink-0 bg-[#efefef]" />
  </>
);

const WindowSliver = () => (
  <div className="flex w-1 shrink-0 flex-col overflow-hidden bg-white">
    <SliverTop />
    <SliverTop />
    <div className="h-2 shrink-0 border-b border-black bg-[#efefef]" />
    {Array.from({ length: 18 }, (_, i) => (
      <div
        key={i}
        className={`flex h-4 shrink-0 items-center justify-end border-b ${i === 6 || i === 7 ? 'border-[#d23a1c]' : 'border-black'} ${
          i % 2 ? 'bg-[#efefef]' : 'bg-[#c8c8c8]'
        }`}
      >
        <span className="h-2 w-px bg-black" />
      </div>
    ))}
    <div className="h-0.5 shrink-0 bg-[#f00]" />
    <div className="h-4 shrink-0 bg-black" />
    {Array.from({ length: 6 }, (_, i) => (
      <div key={i} className="h-4 shrink-0 border-b border-[#a5a5a5] bg-[#eee]" />
    ))}
    <div className="h-[29px] shrink-0 bg-black" />
    <div className="flex-1 border-l-2 border-[#6a86e0] bg-[#0a2a9c]" />
  </div>
);

const App = () => (
  <div className={`flex h-screen overflow-hidden bg-white text-[11px] leading-[14px] text-black ${UI_FONT}`}>
    <div className="flex min-w-0 flex-1 flex-col">
      <BrowserChrome />
      <BrowserChrome />
      <TabBar />
      <PdfToolbar />
      <div className="flex min-h-0 flex-1">
        <SideBar />
        <main className="-mt-[13px] grid flex-1 grid-cols-2 items-start gap-[34px] border-r-[5px] border-[#333] px-[102px] font-['Liberation_Serif',serif] text-[17px]">
          <LeftColumn />
          <RightColumn />
        </main>
        <ScrollBar />
      </div>
    </div>
    <WindowSliver />
  </div>
);

export default App;
